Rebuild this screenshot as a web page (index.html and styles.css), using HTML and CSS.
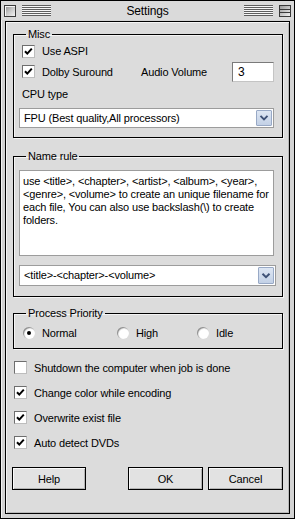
FILE: index.html
```html
<!DOCTYPE html>
<html>
<head>
<meta charset="utf-8">
<title>Settings</title>
<link rel="stylesheet" href="styles.css">
</head>
<body>
<div class="window">
  <div class="titlebar">
    <span class="closebox"></span>
    <span class="stripes"></span>
    <span class="title">Settings</span>
    <span class="stripes"></span>
    <span class="zoombox"><span class="zoominner"></span></span>
  </div>
  <div class="frame">
    <fieldset class="group misc">
      <legend>Misc</legend>
      <div class="row r1">
        <span class="cb"><svg viewBox="0 0 11 11" width="11" height="11"><path d="M2 5.2 L4.3 7.6 L8.8 2.6" fill="none" stroke="#000" stroke-width="2"/></svg></span>
        <span>Use ASPI</span>
      </div>
      <div class="row r2">
        <span class="checkwrap">
          <span class="cb"><svg viewBox="0 0 11 11" width="11" height="11"><path d="M2 5.2 L4.3 7.6 L8.8 2.6" fill="none" stroke="#000" stroke-width="2"/></svg></span>
          <span>Dolby Suround</span>
        </span>
        <span>Audio Volume</span>
        <span class="textbox">3</span>
      </div>
      <div class="label cpu">CPU type</div>
      <div class="select s1">
        <span class="seltext">FPU (Best quality,All processors)</span>
        <span class="selbtn"><svg viewBox="0 0 16 18" width="14" height="16"><path d="M4 6.5 L8 10.5 L12 6.5" fill="none" stroke="#3e5176" stroke-width="2.2"/></svg></span>
      </div>
    </fieldset>

    <fieldset class="group name">
      <legend>Name rule</legend>
      <div class="memo">use &lt;title&gt;, &lt;chapter&gt;, &lt;artist&gt;, &lt;album&gt;, &lt;year&gt;,<br>&lt;genre&gt;, &lt;volume&gt; to create an unique filename for<br>each file, You can also use backslash(\) to create<br>folders.</div>
      <div class="select s2">
        <span class="seltext">&lt;title&gt;-&lt;chapter&gt;-&lt;volume&gt;</span>
        <span class="selbtn"><svg viewBox="0 0 16 18" width="14" height="17"><path d="M4 7 L8 11 L12 7" fill="none" stroke="#3e5176" stroke-width="2.2"/></svg></span>
      </div>
    </fieldset>

    <fieldset class="group prio">
      <legend>Process Priority</legend>
      <div class="radios">
        <span class="radio-item w1"><span class="radio on"></span>Normal</span>
        <span class="radio-item w2"><span class="radio"></span>High</span>
        <span class="radio-item"><span class="radio"></span>Idle</span>
      </div>
    </fieldset>

    <div class="options">
      <div class="row opt"><span class="cb"></span><span>Shutdown the computer when job is done</span></div>
      <div class="row opt"><span class="cb"><svg viewBox="0 0 11 11" width="11" height="11"><path d="M2 5.2 L4.3 7.6 L8.8 2.6" fill="none" stroke="#000" stroke-width="2"/></svg></span><span>Change color while encoding</span></div>
      <div class="row opt"><span class="cb"><svg viewBox="0 0 11 11" width="11" height="11"><path d="M2 5.2 L4.3 7.6 L8.8 2.6" fill="none" stroke="#000" stroke-width="2"/></svg></span><span>Overwrite exist file</span></div>
      <div class="row opt"><span class="cb"><svg viewBox="0 0 11 11" width="11" height="11"><path d="M2 5.2 L4.3 7.6 L8.8 2.6" fill="none" stroke="#000" stroke-width="2"/></svg></span><span>Auto detect DVDs</span></div>
    </div>

    <div class="buttons">
      <span class="btn help">Help</span>
      <span class="btn ok">OK</span>
      <span class="btn cancel">Cancel</span>
    </div>
  </div>
</div>
</body>
</html>
```
FILE: styles.css
```css
* { box-sizing: border-box; }
html, body { margin: 0; padding: 0; background: #fff; }
body {
  font-family: "Liberation Sans", Arial, sans-serif;
  font-size: 11px;
  letter-spacing: -0.15px;
  color: #000;
}
.window {
  width: 295px;
  height: 519px;
  border: 1px solid #000;
  background: #d2d2d2;
  display: flex;
  flex-direction: column;
  box-shadow: inset 1px 1px 0 #f2f2f2;
}
.titlebar {
  height: 19px;
  flex: none;
  display: flex;
  align-items: center;
  gap: 6px;
  padding: 0 3px;
  background: #dadada;
}
.closebox {
  width: 12px;
  height: 12px;
  border: 1px solid #3a3a3a;
  background: linear-gradient(135deg, #8e8e8e 0%, #c8c8c8 50%, #f4f4f4 100%);
  box-shadow: inset 1px 1px 0 #f6f6f6;
  flex: none;
}
.stripes {
  width: 29px;
  height: 11px;
  flex: none;
  background: repeating-linear-gradient(to bottom, #5e5e5e 0 1px, #f6f6f6 1px 2px);
}
.title {
  flex: 1;
  text-align: center;
  font-size: 12px;
  line-height: 19px;
  padding-top: 1px;
}
.zoombox {
  width: 12px;
  height: 12px;
  flex: none;
  border: 1px solid #3a3a3a;
  background: linear-gradient(135deg, #9a9a9a, #f0f0f0);
  padding: 3px 0 0;
}
.zoominner {
  display: block;
  height: 4px;
  border-top: 1px solid #3a3a3a;
  border-bottom: 1px solid #3a3a3a;
}
.frame {
  flex: 1;
  margin: 1px 4px 4px;
  border: 1px solid #000;
  background: #dcdcdc;
  padding: 5px 6px 0 7px;
  display: flex;
  flex-direction: column;
  box-shadow: inset 1px 1px 0 #f4f4f4, inset -1px -1px 0 #b8b8b8;
}
.group {
  margin: 0;
  min-width: 0;
  border: 1px solid #000;
  padding: 0 8px 9px 8px;
  box-shadow: inset 1px 1px 0 #f4f4f4, 1px 1px 0 #f4f4f4;
}
.group legend {
  margin-left: 4px;
  padding: 0 2px;
  line-height: 14px;
}
.row {
  display: flex;
  align-items: center;
}
.r1 { height: 20px; }
.r2 { height: 21px; }
.checkwrap {
  display: flex;
  align-items: center;
  width: 119px;
}
.cb {
  width: 13px;
  height: 13px;
  flex: none;
  margin-right: 7px;
  background: #fff;
  border: 1px solid;
  border-color: #6e6e6e #bdbdbd #bdbdbd #6e6e6e;
  display: flex;
  align-items: center;
  justify-content: center;
}
.cb svg { display: block; }
.textbox {
  margin-left: auto;
  width: 42px;
  height: 20px;
  background: #fff;
  border: 1px solid;
  border-color: #7a7a7a #c4c4c4 #c4c4c4 #7a7a7a;
  padding: 0 0 0 5px;
  font-size: 12px;
  line-height: 18px;
}
.label.cpu {
  margin-top: 4px;
  line-height: 16px;
}
.select {
  display: flex;
  align-items: stretch;
  background: #fff;
  border: 1px solid #9c9c9c;
  margin-left: -3px;
  padding: 1px;
}
.s1 { margin-top: 6px; height: 20px; }
.s2 { margin-top: 9px; height: 21px; margin-right: -2px; }
.seltext {
  flex: 1;
  padding-left: 3px;
  line-height: 16px;
  white-space: nowrap;
}
.s2 .seltext { line-height: 17px; }
.selbtn {
  width: 16px;
  flex: none;
  border: 1px solid #98a9c6;
  border-radius: 1px;
  background: linear-gradient(to bottom, #dde6f3, #c3d1e6);
  display: flex;
  align-items: center;
  justify-content: center;
}
.selbtn svg { display: block; }
.name { margin-top: 11px; padding-bottom: 10px; }
.memo {
  margin-top: 7px;
  margin-left: -3px;
  height: 86px;
  background: #fff;
  border: 1px solid #9c9c9c;
  padding: 4px 0 0 3px;
  line-height: 13px;
  white-space: nowrap;
}
.prio { margin-top: 9px; padding-bottom: 4px; }
.radios {
  display: flex;
  align-items: center;
  height: 22px;
  margin-top: 2px;
}
.radio-item {
  display: flex;
  align-items: center;
}
.w1 { width: 94px; }
.w2 { width: 80px; }
.radio {
  width: 12px;
  height: 12px;
  margin: 0 7px 0 1px;
  border-radius: 50%;
  background: radial-gradient(circle at 60% 60%, #ffffff 0 45%, #e6e6e6 70%, #a0a0a0 100%);
  box-shadow: inset 1px 1px 1px #8a8a8a;
  position: relative;
  flex: none;
}
.radio.on::after {
  content: "";
  position: absolute;
  left: 4px;
  top: 4px;
  width: 4px;
  height: 4px;
  border-radius: 50%;
  background: #000;
}
.options {
  margin-top: 6px;
}
.opt {
  height: 25px;
  padding-left: 1px;
}
.buttons {
  display: flex;
  margin-top: 12px;
}
.btn {
  height: 23px;
  border: 1px solid #000;
  background: #e2e2e2;
  box-shadow: inset 1px 1px 0 #fafafa, inset -1px -1px 0 #b4b4b4;
  display: flex;
  align-items: center;
  justify-content: center;
}
.help { width: 74px; margin-left: -1px; }
.ok { width: 75px; margin-left: auto; }
.cancel { width: 75px; margin-left: 5px; }
```
